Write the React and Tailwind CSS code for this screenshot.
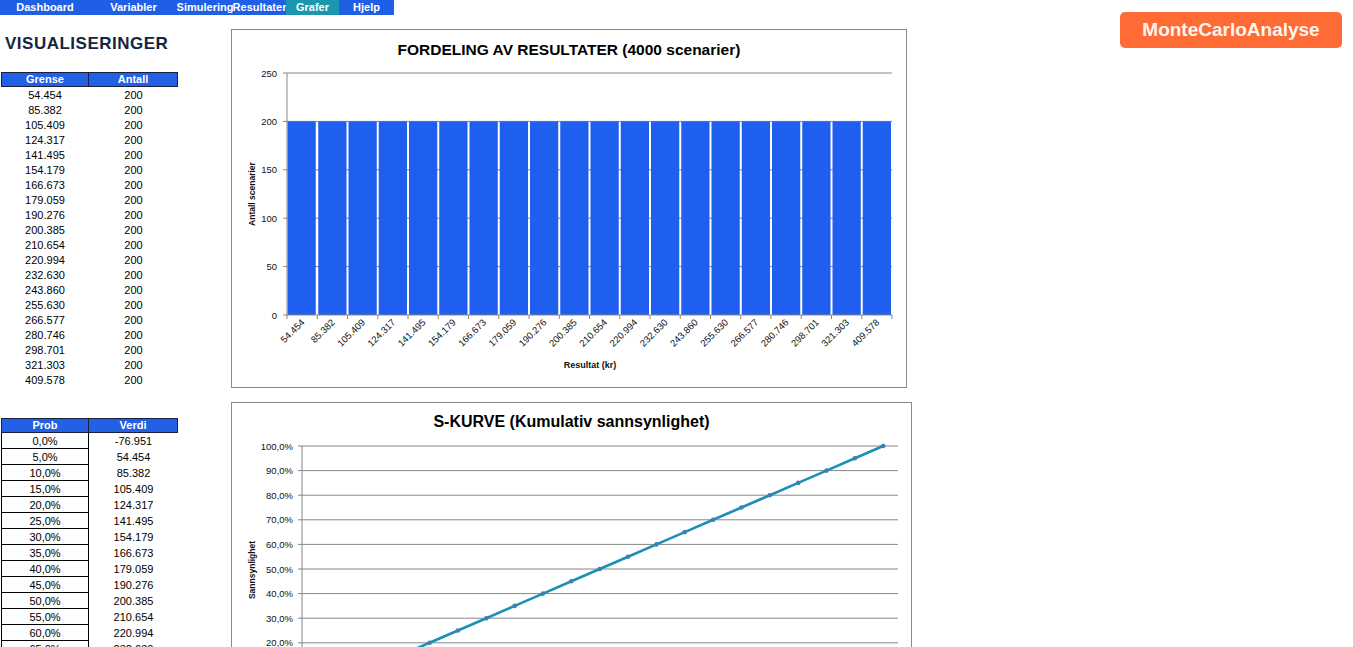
import React from "react";

const GRENSE = [
  "54.454", "85.382", "105.409", "124.317", "141.495", "154.179", "166.673", "179.059", "190.276", "200.385",
  "210.654", "220.994", "232.630", "243.860", "255.630", "266.577", "280.746", "298.701", "321.303", "409.578",
];

const VERDI = ["-76.951", ...GRENSE.slice(0, 13)];

const MENU = [
  { label: "Dashboard", w: "w-[90px]" },
  { label: "Variabler", w: "w-[87px]" },
  { label: "Simulering", w: "w-[56px]" },
  { label: "Resultater", w: "w-[53px]" },
  { label: "Grafer", w: "w-[53px]", active: true },
  { label: "Hjelp", w: "w-[55px]" },
];

const GRID = "#878787";

// Fordeling: søylediagram
const BarChart = () => {
  const x0 = 287, x1 = 892, yTop = 73, yBase = 315;
  const bw = (x1 - x0) / 20;
  const yOf = (v) => yBase - (v * (yBase - yTop)) / 250;
  return (
    <div className="w-[676px] h-[359px] border border-[#8a8a8a] bg-white flex flex-col">
      <div className="pt-[9px] h-[31px] leading-[22px] text-center text-[15.5px] font-bold text-black">
        FORDELING AV RESULTATER (4000 scenarier)
      </div>
      <svg width="674" height="326" viewBox="232 61 674 326" fontFamily="'Liberation Sans', Arial, sans-serif">
        {[250, 200, 150, 100, 50].map((v) => (
          <line key={v} x1={x0} x2={x1} y1={yOf(v)} y2={yOf(v)} stroke={GRID} strokeWidth="1" />
        ))}
        {GRENSE.map((g, i) => (
          <rect key={g} x={x0 + i * bw + (i === 0 ? 0.5 : 1)} y={yOf(200)} width={bw - 2} height={yBase - yOf(200)} fill="#1f5fef" />
        ))}
        <line x1={x0} x2={x0} y1={yTop} y2={yBase} stroke={GRID} />
        <line x1={x0} x2={x1} y1={yBase} y2={yBase} stroke={GRID} />
        {[250, 200, 150, 100, 50, 0].map((v) => (
          <g key={v}>
            <line x1={x0 - 4} x2={x0} y1={yOf(v)} y2={yOf(v)} stroke={GRID} />
            <text x={x0 - 10} y={yOf(v) + 3.5} fontSize="9.5" textAnchor="end" fill="#111">{v}</text>
          </g>
        ))}
        {Array.from({ length: 21 }).map((_, i) => (
          <line key={i} x1={x0 + i * bw} x2={x0 + i * bw} y1={yBase} y2={yBase + 4} stroke={GRID} />
        ))}
        {GRENSE.map((g, i) => {
          const cx = x0 + (i + 0.5) * bw + 3;
          return (
            <text key={g} x={cx} y={323} fontSize="9.5" textAnchor="end" fill="#111" transform={`rotate(-45 ${cx} 323)`}>
              {g}
            </text>
          );
        })}
        <text x="255" y="194" fontSize="8.5" fontWeight="bold" textAnchor="middle" fill="#111" transform="rotate(-90 255 194)">
          Antall scenarier
        </text>
        <text x="590" y="368" fontSize="9" fontWeight="bold" textAnchor="middle" fill="#111">Resultat (kr)</text>
      </svg>
    </div>
  );
};

// S-kurve: kumulativ sannsynlighet
const SCurve = () => {
  const x0 = 302, x1 = 898, y100 = 446, step = 24.6;
  const yOf = (p) => y100 + ((100 - p) / 10) * step;
  const pts = Array.from({ length: 21 }).map((_, i) => [316.2 + i * 28.35, yOf(i * 5)]);
  return (
    <div className="w-[681px] h-[360px] border border-[#8a8a8a] bg-white flex flex-col">
      <div className="pt-[8px] h-[30px] leading-[22px] text-center text-[16px] font-bold text-black">
        S-KURVE (Kumulativ sannsynlighet)
      </div>
      <svg width="679" height="328" viewBox="232 433 679 328" fontFamily="'Liberation Sans', Arial, sans-serif">
        {[100, 90, 80, 70, 60, 50, 40, 30, 20].map((p) => (
          <line key={p} x1={x0} x2={x1} y1={yOf(p)} y2={yOf(p)} stroke={GRID} />
        ))}
        <line x1={x0} x2={x0} y1={y100} y2={yOf(0)} stroke={GRID} />
        {[100, 90, 80, 70, 60, 50, 40, 30, 20].map((p) => (
          <g key={p}>
            <line x1={x0 - 4} x2={x0} y1={yOf(p)} y2={yOf(p)} stroke={GRID} />
            <text x={x0 - 9} y={yOf(p) + 3.5} fontSize="9.5" textAnchor="end" fill="#111">{`${p},0%`}</text>
          </g>
        ))}
        <polyline points={pts.map((p) => p.join(",")).join(" ")} fill="none" stroke="#1b8fb6" strokeWidth="2.6" strokeLinejoin="round" />
        {pts.map(([x, y], i) => (
          <circle key={i} cx={x} cy={y} r="2.3" fill="#3f7fb4" />
        ))}
        <text x="255" y="570" fontSize="8.5" fontWeight="bold" textAnchor="middle" fill="#111" transform="rotate(-90 255 570)">
          Sannsynlighet
        </text>
      </svg>
    </div>
  );
};

const HeaderRow = ({ a, b }) => (
  <div className="flex w-[177px] h-[15px] bg-[#2260e6] border border-[#1a1f3a] text-white font-bold text-[11px] leading-[13px]">
    <div className="w-[87px] border-r border-[#1a1f3a] text-center">{a}</div>
    <div className="flex-1 text-center">{b}</div>
  </div>
);

export default function App() {
  return (
    <div className="w-[1353px] h-[647px] overflow-hidden bg-white flex font-['Liberation_Sans',Arial,sans-serif] text-black">
      <div className="w-[1120px] shrink-0 flex flex-col">
        {/* menylinje */}
        <div className="flex w-[394px] h-[15px] bg-[#1f5fe6]">
          {MENU.map((m) => (
            <div
              key={m.label}
              className={`${m.w} h-[15px] flex justify-center overflow-hidden whitespace-nowrap text-[11px] leading-[15px] font-bold text-white ${m.active ? "bg-[#1a97ae]" : ""}`}
            >
              <span>{m.label}</span>
            </div>
          ))}
        </div>

        <div className="flex">
          {/* venstre kolonne med tabeller */}
          <div className="w-[231px] shrink-0 flex flex-col">
            <div className="mt-[19px] pl-[5px] h-[20px] leading-[20px] text-[17px] font-bold tracking-[0.5px] text-[#142540]">
              VISUALISERINGER
            </div>

            <div className="mt-[18px] ml-[1px] flex flex-col">
              <HeaderRow a="Grense" b="Antall" />
              {GRENSE.map((g) => (
                <div key={g} className="flex h-[15px] text-[11px] leading-[16px]">
                  <div className="w-[88px] text-center">{g}</div>
                  <div className="w-[89px] text-center">200</div>
                </div>
              ))}
            </div>

            <div className="mt-[31px] ml-[1px] flex flex-col">
              <HeaderRow a="Prob" b="Verdi" />
              {VERDI.map((v, i) => (
                <div key={i} className="flex h-[16px] text-[11px] leading-[16px]">
                  <div className="w-[88px] border-x border-b border-black bg-[#fbfdff] text-center">{`${i * 5},0%`}</div>
                  <div className="w-[89px] text-center">{v}</div>
                </div>
              ))}
            </div>
          </div>

          {/* grafer */}
          <div className="flex flex-col pt-[14px] gap-[14px]">
            <BarChart />
            <SCurve />
          </div>
        </div>
      </div>

      <div className="pt-[12px]">
        <div className="w-[222px] h-[36px] rounded-[5px] bg-[#ff6b35] flex items-center justify-center text-[19px] font-bold text-[#fff6f0]">
          MonteCarloAnalyse
        </div>
      </div>
    </div>
  );
}
